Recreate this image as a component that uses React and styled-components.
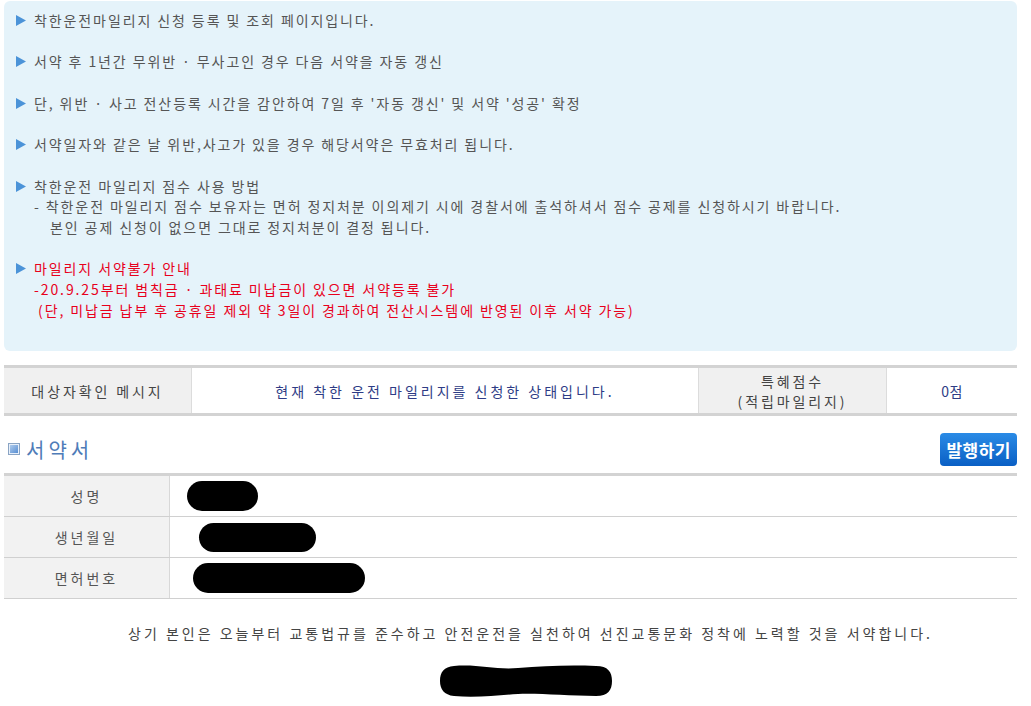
import React from 'react'
import styled, { createGlobalStyle } from 'styled-components'

const GlobalStyle = createGlobalStyle`
  body {
    margin: 0;
    background: #fff;
    font-family: "Noto Sans CJK KR", "Noto Sans", sans-serif;
  }
`

const Page = styled.div`
  width: 1013px;
  padding: 1px 0 0 4px;
  font-size: 14px;
  color: #555;
`

const InfoBox = styled.div`
  background: #e5f3fa;
  border-radius: 6px;
  padding: 9px 12px 31px 12px;
`

const Item = styled.div`
  display: flex;
  align-items: flex-start;
  margin-bottom: 20.7px;
  color: ${({ red }) => red ? '#e8001c' : '#555'};
  &:last-child { margin-bottom: 0; }
`

const Arrow = styled.svg`
  flex: none;
  width: 10px;
  height: 11px;
  margin: 5px 8px 0 0;
`

const Lines = styled.div`
  line-height: 20.7px;
  letter-spacing: 1.9px;
`

const Sub = styled.div`
  padding-left: ${({ indent }) => indent || 0}px;
`

const Bullet = () => (
  <Arrow viewBox="0 0 10 11">
    <path d="M0 0 L10 5.5 L0 11 Z" fill="#4b93d8" />
  </Arrow>
)

const InfoTable = styled.div`
  display: grid;
  grid-template-columns: 188px 506px 189px 1fr;
  margin-top: 14px;
  border-top: 3px solid #d3d3d3;
  border-bottom: 3px solid #d3d3d3;
  height: 45px;
`

const HeadCell = styled.div`
  background: #f0f0f0;
  display: flex;
  flex-direction: column;
  align-items: center;
  justify-content: center;
  color: #444;
  letter-spacing: 2.9px;
  line-height: 20px;
  border-left: ${({ first }) => first ? 'none' : '1px solid #dcdcdc'};
  border-right: 1px solid #dcdcdc;
`

const ValueCell = styled.div`
  display: flex;
  align-items: center;
  justify-content: center;
  color: #2e3c86;
  letter-spacing: ${({ wide }) => wide ? '3px' : '0.5px'};
`

const SectionHead = styled.div`
  display: flex;
  align-items: center;
  justify-content: space-between;
  margin: 17px 0 8px;
  height: 32px;
`

const Title = styled.div`
  display: flex;
  align-items: center;
  font-size: 20px;
  color: #4f7cb8;
  letter-spacing: 4px;
  padding-left: 4px;
`

const TitleMark = styled.span`
  width: 10px;
  height: 10px;
  margin-right: 6px;
  border: 1px solid #8aa4c4;
  background: linear-gradient(135deg, #b9d3f0, #4d86cf);
  box-shadow: inset 0 0 0 1px #e8f0fa;
`

const IssueButton = styled.button`
  height: 33px;
  padding: 0 6px;
  border: none;
  border-radius: 4px;
  background: linear-gradient(#2a8be6, #0a5fc4);
  color: #fff;
  font-family: inherit;
  font-size: 17px;
  font-weight: 700;
  letter-spacing: 0.5px;
`

const PledgeTable = styled.div`
  border-top: 3px solid #d3d3d3;
  border-bottom: 1px solid #d0d0d0;
`

const Row = styled.div`
  display: grid;
  grid-template-columns: 166px 1fr;
  height: 40px;
  & + & { border-top: 1px solid #d0d0d0; }
`

const Label = styled.div`
  background: #f2f2f2;
  border-right: 1px solid #d8d8d8;
  display: flex;
  align-items: center;
  justify-content: center;
  color: #555;
  letter-spacing: 3px;
`

const Value = styled.div`
  display: flex;
  align-items: center;
`

const Redact = styled.div`
  height: ${({ h }) => h || 30}px;
  width: ${({ w }) => w}px;
  margin-left: ${({ left }) => left}px;
  background: #000;
  border-radius: 16px;
`

const Pledge = styled.div`
  text-align: center;
  padding: 24px 0 0 40px;
  color: #444;
  letter-spacing: 3px;
  line-height: 20px;
`

const Signature = styled.svg`
  display: block;
  margin: 21px 0 0 434px;
`

export default function App() {
  return (
    <Page>
      <GlobalStyle />
      <InfoBox>
        <Item>
          <Bullet />
          <Lines>착한운전마일리지 신청 등록 및 조회 페이지입니다.</Lines>
        </Item>
        <Item>
          <Bullet />
          <Lines>서약 후 1년간 무위반 · 무사고인 경우 다음 서약을 자동 갱신</Lines>
        </Item>
        <Item>
          <Bullet />
          <Lines>단, 위반 · 사고 전산등록 시간을 감안하여 7일 후 '자동 갱신' 및 서약 '성공' 확정</Lines>
        </Item>
        <Item>
          <Bullet />
          <Lines>서약일자와 같은 날 위반,사고가 있을 경우 해당서약은 무효처리 됩니다.</Lines>
        </Item>
        <Item>
          <Bullet />
          <Lines>
            <Sub>착한운전 마일리지 점수 사용 방법</Sub>
            <Sub>- 착한운전 마일리지 점수 보유자는 면허 정지처분 이의제기 시에 경찰서에 출석하셔서 점수 공제를 신청하시기 바랍니다.</Sub>
            <Sub indent={16}>본인 공제 신청이 없으면 그대로 정지처분이 결정 됩니다.</Sub>
          </Lines>
        </Item>
        <Item red>
          <Bullet />
          <Lines>
            <Sub>마일리지 서약불가 안내</Sub>
            <Sub>-20.9.25부터 범칙금 · 과태료 미납금이 있으면 서약등록 불가</Sub>
            <Sub indent={4}>(단, 미납금 납부 후 공휴일 제외 약 3일이 경과하여 전산시스템에 반영된 이후 서약 가능)</Sub>
          </Lines>
        </Item>
      </InfoBox>

      <InfoTable>
        <HeadCell first>대상자확인 메시지</HeadCell>
        <ValueCell wide>현재 착한 운전 마일리지를 신청한 상태입니다.</ValueCell>
        <HeadCell>
          <span>특혜점수</span>
          <span>(적립마일리지)</span>
        </HeadCell>
        <ValueCell>0점</ValueCell>
      </InfoTable>

      <SectionHead>
        <Title><TitleMark />서약서</Title>
        <IssueButton>발행하기</IssueButton>
      </SectionHead>

      <PledgeTable>
        <Row>
          <Label>성명</Label>
          <Value><Redact w={71} left={17} /></Value>
        </Row>
        <Row>
          <Label>생년월일</Label>
          <Value><Redact w={117} left={29} h={29} /></Value>
        </Row>
        <Row>
          <Label>면허번호</Label>
          <Value><Redact w={172} left={23} /></Value>
        </Row>
      </PledgeTable>

      <Pledge>상기 본인은 오늘부터 교통법규를 준수하고 안전운전을 실천하여 선진교통문화 정착에 노력할 것을 서약합니다.</Pledge>

      <Signature width="176" height="34" viewBox="0 0 176 34">
        <path d="M16 2 C40 0 58 6 80 4 C105 2 130 1 158 2 C170 2 174 8 174 17 C174 26 170 32 158 32 C130 32 100 29 80 30 C60 31 40 34 16 32 C6 31 2 25 2 17 C2 8 6 3 16 2 Z" fill="#000" />
      </Signature>
    </Page>
  )
}
